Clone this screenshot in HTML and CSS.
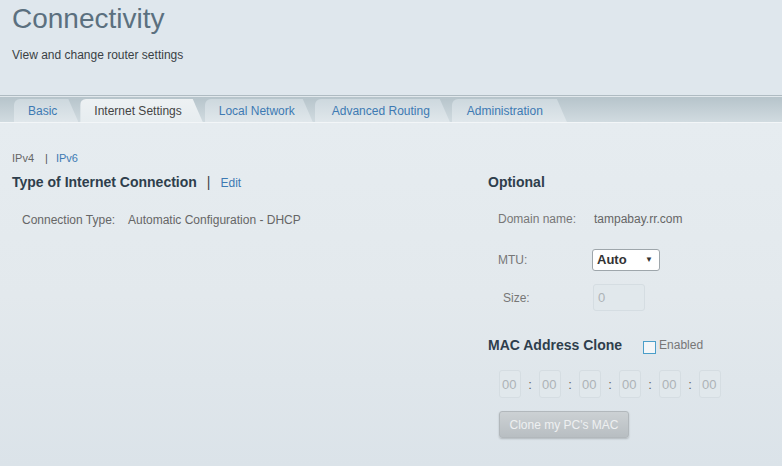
FILE: index.html
```html
<!DOCTYPE html>
<html lang="en">
<head>
<meta charset="utf-8">
<title>Connectivity</title>
<link rel="stylesheet" href="styles.css">
</head>
<body>
<div class="page">
  <header class="hdr">
    <h1 class="title">Connectivity</h1>
    <p class="subtitle">View and change router settings</p>
  </header>
  <nav class="tabs">
    <a class="tab">Basic</a>
    <a class="tab tab-active">Internet Settings</a>
    <a class="tab tab-local">Local Network</a>
    <a class="tab tab-wide">Advanced Routing</a>
    <a class="tab tab-admin">Administration</a>
  </nav>
  <main class="content">
    <div class="iprow"><span class="muted">IPv4</span><span class="sep">|</span><a class="link">IPv6</a></div>
    <div class="cols">
      <section class="col-left">
        <h2 class="sec-title">Type of Internet Connection<span class="sep2">|</span><a class="link edit">Edit</a></h2>
        <div class="kv conn">
          <span class="k k-conn">Connection Type:</span>
          <span class="v">Automatic Configuration - DHCP</span>
        </div>
      </section>
      <section class="col-right">
        <h2 class="sec-title">Optional</h2>
        <div class="kv domain">
          <span class="k">Domain name:</span>
          <span class="v">tampabay.rr.com</span>
        </div>
        <div class="kv mtu">
          <span class="k">MTU:</span>
          <div class="select"><span class="select-text">Auto</span><span class="caret">&#9660;</span></div>
        </div>
        <div class="kv size">
          <span class="k k-size">Size:</span>
          <div class="field field-size">0</div>
        </div>
        <div class="mac-head">
          <h2 class="sec-title">MAC Address Clone</h2>
          <span class="checkbox"></span>
          <span class="check-label">Enabled</span>
        </div>
        <div class="macs">
          <div class="field mac">00</div><span class="colon">:</span>
          <div class="field mac">00</div><span class="colon">:</span>
          <div class="field mac">00</div><span class="colon">:</span>
          <div class="field mac">00</div><span class="colon">:</span>
          <div class="field mac">00</div><span class="colon">:</span>
          <div class="field mac">00</div>
        </div>
        <button class="btn">Clone my PC's MAC</button>
      </section>
    </div>
  </main>
</div>
</body>
</html>
```
FILE: styles.css
```css
* { box-sizing: border-box; }
html, body { margin: 0; padding: 0; }
body {
  width: 782px;
  height: 466px;
  overflow: hidden;
  font-family: "Liberation Sans", Arial, sans-serif;
  background: #e2e9ee;
}
.page { display: flex; flex-direction: column; height: 466px; }

.hdr {
  height: 95px;
  padding: 3px 12px 0;
  background: #dfe7ed;
}
.title {
  margin: 0;
  font-size: 28px;
  line-height: 32px;
  font-weight: normal;
  color: #5b707f;
}
.subtitle {
  margin: 12px 0 0;
  font-size: 12px;
  line-height: 16px;
  color: #3a3f44;
}

.tabs {
  display: flex;
  align-items: flex-end;
  gap: 2px;
  height: 28px;
  padding-left: 14px;
  border-top: 1px solid #afbbc2;
  border-bottom: 1px solid #f3f6f8;
  box-shadow: inset 0 1px 0 #e1e8ec;
  background: linear-gradient(#b4c2c9 0%, #c3cfd5 50%, #d2dce1 100%);
  background-origin: border-box;
}
.tab {
  display: flex;
  align-items: center;
  height: 23px;
  padding: 0 21px 0 14px;
  font-size: 12px;
  color: #3d7ab3;
  background: linear-gradient(#cdd8de, #e0e7eb);
  border-top-left-radius: 6px;
  clip-path: polygon(0 0, calc(100% - 10px) 0, 100% 100%, 0 100%);
  cursor: pointer;
}
.tab-active {
  color: #444;
  background: linear-gradient(#edf1f3, #e7edf0);
}
.tab-local { padding-right: 18px; }
.tab-wide { padding-left: 17px; padding-right: 20px; }
.tab-admin { padding-left: 15px; padding-right: 24px; }

.content {
  flex: 1;
  padding: 28px 0 0 12px;
  background: linear-gradient(#e6ecf0 0%, #e3e9ed 50%, #dbe3e9 100%);
}
.iprow {
  display: flex;
  font-size: 11px;
  line-height: 14px;
}
.muted { color: #666; }
.sep { color: #555; margin: 0 8px 0 11px; }
.link { color: #3d7ab3; cursor: pointer; }

.cols {
  display: grid;
  grid-template-columns: 476px 1fr;
  margin-top: 8px;
}
.sec-title {
  margin: 0;
  font-size: 14px;
  line-height: 18px;
  font-weight: bold;
  color: #2e3e4c;
}
.sep2 { font-weight: normal; color: #444; margin: 0 10px 0 10px; }
.edit { font-weight: normal; font-size: 12px; }

.kv {
  display: flex;
  align-items: center;
  font-size: 12px;
  line-height: 16px;
  color: #666;
}
.k { width: 104px; padding-left: 10px; flex: none; color: #777; }
.v { color: #666; }
.conn { margin-top: 20px; }
.k-conn { width: 116px; color: #666; }
.domain { margin-top: 20px; }
.domain .v { padding-left: 2px; }
.mtu { margin-top: 22px; height: 22px; }
.size { margin-top: 13px; height: 27px; }
.k-size { padding-left: 15px; width: 105px; }

.select {
  display: flex;
  align-items: center;
  justify-content: space-between;
  width: 68px;
  height: 22px;
  padding: 0 6px 0 4px;
  background: #fff;
  border: 1px solid #9ea6ab;
  border-radius: 3px;
}
.select-text { font-size: 13px; font-weight: bold; color: #333; }
.caret { font-size: 8px; color: #333; }

.field {
  display: flex;
  align-items: center;
  background: #e1e8ec;
  border: 1px solid #d5dde2;
  border-radius: 3px;
  font-size: 13px;
  color: #adb3b7;
}
.field-size { width: 52px; height: 27px; padding-left: 4px; }

.mac-head {
  display: flex;
  align-items: flex-start;
  margin-top: 25px;
  height: 18px;
}
.checkbox {
  width: 13px;
  height: 13px;
  margin: 5px 0 0 21px;
  border: 1px solid #4a9ec9;
  background: #f3f6f8;
}
.check-label {
  margin-left: 3px;
  font-size: 12px;
  line-height: 18px;
  color: #777;
}

.macs {
  display: flex;
  align-items: center;
  margin-top: 16px;
  padding-left: 11px;
}
.mac { width: 22px; height: 28px; padding-left: 2px; }
.colon {
  width: 18px;
  text-align: center;
  font-size: 13px;
  color: #666;
}

.btn {
  display: block;
  margin: 13px 0 0 11px;
  width: 130px;
  height: 27px;
  padding: 0;
  font-family: "Liberation Sans", Arial, sans-serif;
  font-size: 12px;
  color: #eef0f1;
  background: linear-gradient(#ccd1d4, #b8bec2);
  border: 1px solid #b2b8bc;
  border-radius: 3px;
  box-shadow: 0 1px 2px rgba(0, 0, 0, 0.2);
}
```
